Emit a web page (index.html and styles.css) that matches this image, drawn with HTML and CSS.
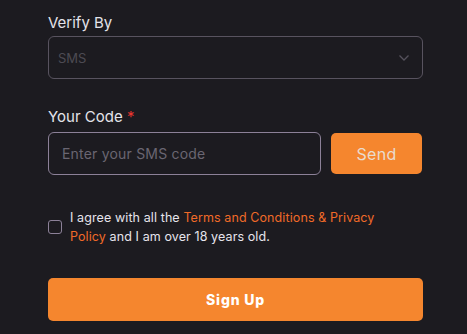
FILE: index.html
```html
<!DOCTYPE html>
<html>
<head>
<meta charset="utf-8">
<link rel="stylesheet" href="styles.css">
</head>
<body>
<form class="form">
  <div class="field">
    <label class="label">Verify By</label>
    <div class="select">
      <span class="select-value">SMS</span>
      <svg class="chevron" width="12" height="8" viewBox="0 0 12 8"><path d="M1.5 1.5 L6 6 L10.5 1.5" fill="none" stroke="#55525c" stroke-width="1.3"/></svg>
    </div>
  </div>
  <div class="field field-code">
    <label class="label">Your Code <span class="req">*</span></label>
    <div class="code-row">
      <div class="input"><span class="placeholder">Enter your SMS code</span></div>
      <button type="button" class="send">Send</button>
    </div>
  </div>
  <div class="agree">
    <span class="checkbox"></span>
    <p class="agree-text">I agree with all the <span class="link">Terms and Conditions &amp; Privacy Policy</span> and I am over 18 years old.</p>
  </div>
  <button type="button" class="signup">Sign Up</button>
</form>
</body>
</html>
```
FILE: styles.css
```css
html, body {
  margin: 0;
  padding: 0;
  background: #1c1b20;
  height: 100%;
}
body {
  font-family: "Inter", "Open Sans", sans-serif;
  color: #e6e4ec;
}
.form {
  width: 375px;
  padding: 13px 0 0 48px;
  display: flex;
  flex-direction: column;
}
.label {
  display: block;
  font-size: 15px;
  line-height: 20px;
  color: #e3e3ea;
  margin-bottom: 3px;
}
.req { color: #e8352f; }
.select {
  height: 43px;
  box-sizing: border-box;
  border: 1px solid #58535f;
  border-radius: 6px;
  display: flex;
  align-items: center;
  justify-content: space-between;
  padding: 0 12px 0 9px;
}
.select-value {
  font-size: 13px;
  color: #4d4b53;
}
.field-code { margin-top: 28px; }
.field-code .label { margin-bottom: 5px; }
.code-row {
  display: flex;
  gap: 10px;
}
.input {
  width: 273px;
  height: 43px;
  box-sizing: border-box;
  border: 1px solid #8c8198;
  border-radius: 6px;
  display: flex;
  align-items: center;
  padding-left: 13px;
}
.placeholder {
  font-size: 14px;
  letter-spacing: 0.2px;
  color: #6a6672;
}
.send {
  width: 91px;
  height: 41px;
  margin-top: 1px;
  border: none;
  border-radius: 5px;
  background: #f5862e;
  color: #eadbcd;
  font-family: inherit;
  font-size: 16px;
  letter-spacing: 0.3px;
  padding: 0;
}
.agree {
  display: flex;
  align-items: center;
  gap: 8px;
  margin-top: 33px;
}
.checkbox {
  flex: none;
  width: 12px;
  height: 12px;
  border: 1.5px solid #8c8198;
  border-radius: 3px;
}
.agree-text {
  margin: 0;
  font-size: 12.5px;
  line-height: 19px;
  letter-spacing: 0.1px;
  color: #e6e4ec;
  width: 320px;
}
.link { color: #f06a28; }
.signup {
  margin-top: 32px;
  height: 43px;
  border: none;
  border-radius: 5px;
  background: #f5862e;
  color: #ffffff;
  font-family: inherit;
  font-weight: 800;
  font-size: 14px;
  letter-spacing: 0.8px;
  padding: 0;
}
```
